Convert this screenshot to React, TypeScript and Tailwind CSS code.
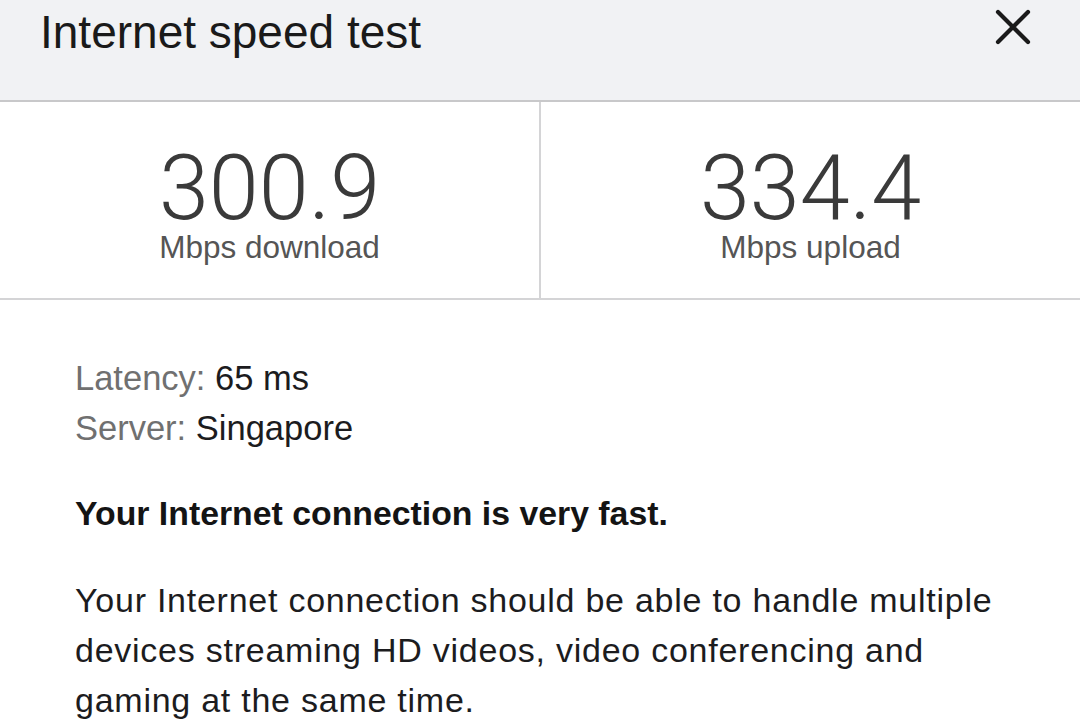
export default function App() {
  return (
    <div className="w-[1080px] h-[720px] overflow-hidden bg-white text-[#1c1c1e]" style={{ fontFamily: '"Liberation Sans", Arial, sans-serif' }}>
      <div className="h-[102px] bg-[#f1f2f4] border-b-2 border-[#c8c8ca] flex items-start justify-between pl-[40px] pr-[49px]">
        <div className="pt-[10px] text-[46px] leading-[45px] text-[#1a1a1a]">Internet speed test</div>
        <svg className="mt-[9px]" width="36" height="36" viewBox="0 0 36 36">
          <path d="M3 3 L33 33 M33 3 L3 33" stroke="#1a1a1a" strokeWidth="4.2" strokeLinecap="round" />
        </svg>
      </div>
      <div className="grid grid-cols-[541px_1fr] border-b-2 border-[#d4d4d6]">
        <div className="border-r-2 border-[#d4d4d6] flex flex-col items-center pt-[47px] pb-[36px]">
          <div className="text-[90px] leading-[80px] text-[#3a3a3a]" style={{ fontFamily: 'Roboto, "Liberation Sans", sans-serif', fontWeight: 300 }}>300.9</div>
          <div className="mt-[3px] text-[31.5px] leading-[30px] text-[#555]">Mbps download</div>
        </div>
        <div className="flex flex-col items-center pt-[47px] pb-[36px]">
          <div className="text-[90px] leading-[80px] text-[#3a3a3a]" style={{ fontFamily: 'Roboto, "Liberation Sans", sans-serif', fontWeight: 300 }}>334.4</div>
          <div className="mt-[3px] text-[31.5px] leading-[30px] text-[#555]">Mbps upload</div>
        </div>
      </div>
      <div className="pl-[75px] pr-[70px] pt-[53px]">
        <div className="text-[34.5px] leading-[50px]">
          <span className="text-[#707070]">Latency: </span>
          <span className="text-[#1c1c1e]">65 ms</span>
        </div>
        <div className="text-[34.5px] leading-[50px]">
          <span className="text-[#707070]">Server: </span>
          <span className="text-[#1c1c1e]">Singapore</span>
        </div>
        <div className="mt-[35px] text-[33.8px] leading-[50px] font-bold text-[#141414]">Your Internet connection is very fast.</div>
        <p className="mt-[37px] text-[34px] leading-[50px] tracking-[0.75px] text-[#1c1c1e]">
          Your Internet connection should be able to handle multiple devices streaming HD videos, video conferencing and gaming at the same time.
        </p>
      </div>
    </div>
  );
}
